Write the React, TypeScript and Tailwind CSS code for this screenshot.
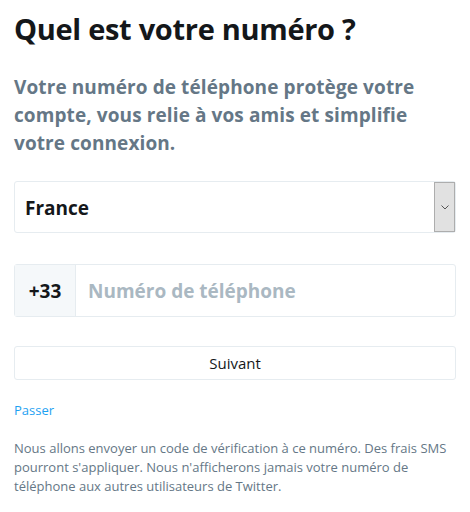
export default function App() {
  return (
    <div
      className="w-[470px] bg-white px-[14px] pt-[7px] text-[#14171a]"
      style={{ fontFamily: '"Open Sans", "Noto Sans", sans-serif' }}
    >
      <h1 className="text-[29px] font-bold leading-[44px] tracking-[-0.3px]">
        Quel est votre numéro ?
      </h1>
      <p className="mt-[22px] text-[19px] font-bold leading-[28px] tracking-[0.1px] text-[#657786]">
        Votre numéro de téléphone protège votre compte, vous relie à vos amis et
        simplifie votre connexion.
      </p>

      <div className="mt-[24px] flex h-[52px] items-stretch rounded-[3px] border border-[#e6ecf0]">
        <div className="flex flex-1 items-center px-[10px] pt-[2px] text-[19px] font-bold">
          France
        </div>
        <div className="flex w-[21px] items-center justify-center border border-[#adadad] bg-[#e1e1e1]">
          <svg width="8" height="5" viewBox="0 0 8 5" fill="none">
            <path d="M0.5 0.5L4 4L7.5 0.5" stroke="#555" strokeWidth="1" />
          </svg>
        </div>
      </div>

      <div className="mt-[31px] flex h-[53px] items-stretch rounded-[3px] border border-[#e6ecf0]">
        <div className="flex w-[61px] items-center justify-center border-r border-[#e6ecf0] bg-[#f5f8fa] pt-[1px] text-[19px] font-bold">
          +33
        </div>
        <div className="flex flex-1 items-center px-[12px] pt-[1px] text-[19px] font-bold text-[#aab8c2]">
          Numéro de téléphone
        </div>
      </div>

      <button className="mt-[29px] flex h-[34px] w-full items-center justify-center rounded-[3px] border border-[#e6ecf0] bg-white text-[15px]">
        Suivant
      </button>

      <div className="mt-[21px] text-[13px] leading-[18px] text-[#1da1f2]">
        Passer
      </div>

      <p className="mt-[20px] pb-[20px] text-[13px] leading-[19px] text-[#657786]">
        Nous allons envoyer un code de vérification à ce numéro. Des frais SMS
        pourront s&apos;appliquer. Nous n&apos;afficherons jamais votre numéro
        de téléphone aux autres utilisateurs de Twitter.
      </p>
    </div>
  );
}
